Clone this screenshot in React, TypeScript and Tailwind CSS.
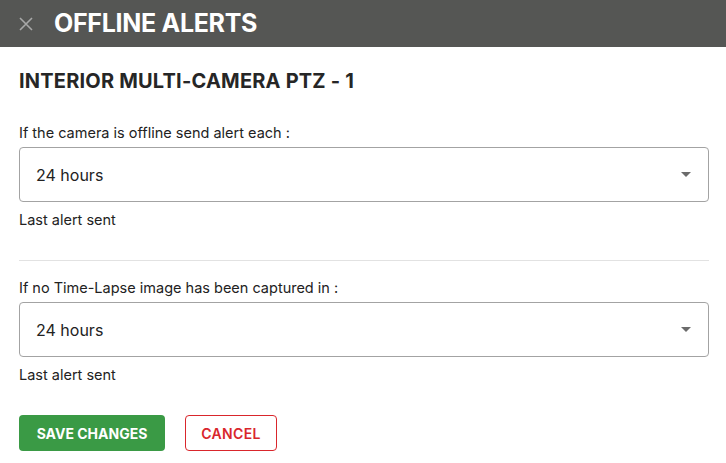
import React from "react";

function Select({ value }: { value: string }) {
  return (
    <div className="flex h-[55px] w-full items-center justify-between rounded-[4px] border border-[#a3a3a3] pl-[16px] pr-[16px]">
      <span className="text-[16px] text-[#222]">{value}</span>
      <svg width="10" height="5" viewBox="0 0 10 5" className="mr-[1px]">
        <path d="M0 0 L10 0 L5 5 Z" fill="#6b6b6b" />
      </svg>
    </div>
  );
}

export default function App() {
  return (
    <div className="h-[463px] w-[726px] bg-white" style={{ fontFamily: "Inter, 'Noto Sans', sans-serif" }}>
      <div className="flex h-[47px] items-center bg-[#555654] pl-[19px]">
        <svg width="14" height="14" viewBox="0 0 14 14">
          <path d="M1 1 L13 13 M13 1 L1 13" stroke="#a8a8a8" strokeWidth="1.6" />
        </svg>
        <span className="ml-[21px] text-[25px] font-bold tracking-[-0.3px] text-white">OFFLINE ALERTS</span>
      </div>
      <div className="flex w-[709px] flex-col pl-[19px]">
        <div className="mt-[22px] text-[20px] font-bold leading-[24px] tracking-[0.2px] text-[#262626]">
          INTERIOR MULTI-CAMERA PTZ - 1
        </div>
        <div className="mt-[31px] text-[14.5px] leading-[18px] text-[#222]">If the camera is offline send alert each :</div>
        <div className="mt-[5px]">
          <Select value="24 hours" />
        </div>
        <div className="mt-[9px] text-[14.5px] leading-[18px] text-[#222]">Last alert sent</div>
        <div className="mt-[31px] h-px w-full bg-[#e2e2e2]" />
        <div className="mt-[18px] text-[14.5px] leading-[18px] text-[#222]">If no Time-Lapse image has been captured in :</div>
        <div className="mt-[5px]">
          <Select value="24 hours" />
        </div>
        <div className="mt-[9px] text-[14.5px] leading-[18px] text-[#222]">Last alert sent</div>
        <div className="mt-[31px] flex gap-[20px]">
          <button className="h-[36px] w-[146px] rounded-[4px] bg-[#3a9a45] text-[14px] font-bold text-white">
            SAVE CHANGES
          </button>
          <button className="h-[36px] w-[92px] rounded-[4px] border border-[#d9262c] text-[14px] font-semibold tracking-[0.3px] text-[#d9262c]">
            CANCEL
          </button>
        </div>
      </div>
    </div>
  );
}
